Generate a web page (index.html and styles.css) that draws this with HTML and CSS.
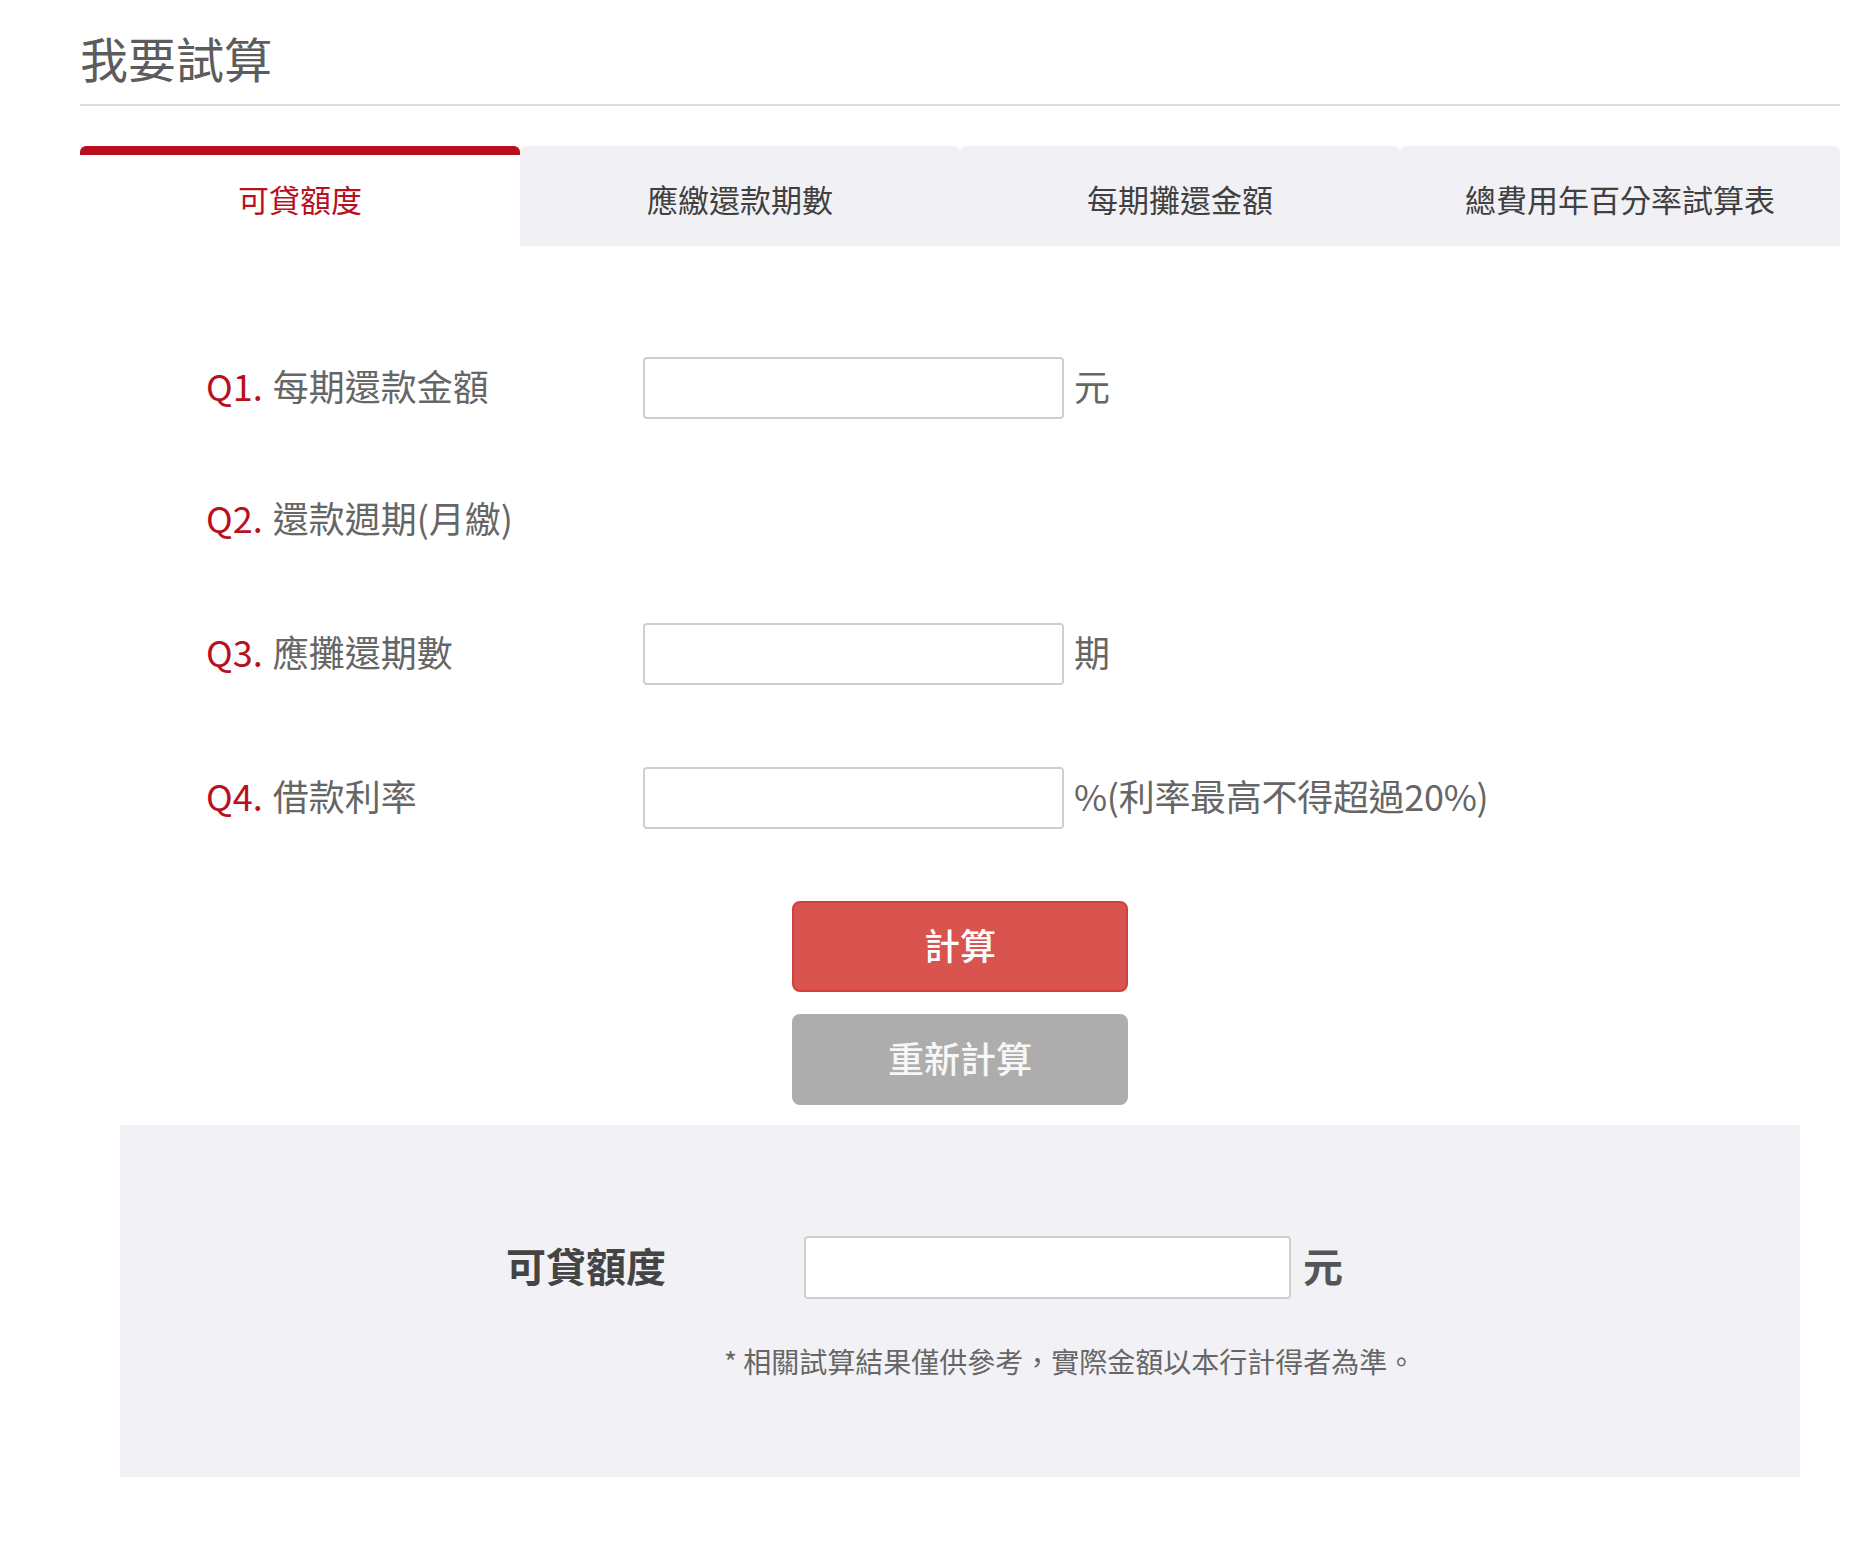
FILE: index.html
```html
<!DOCTYPE html>
<html lang="zh-Hant">
<head>
    <meta charset="UTF-8">
    <meta name="viewport" content="width=device-width, initial-scale=1.0">
    <title>我要試算</title>
    <link rel="stylesheet" href="styles.css">
</head>
<body>
    <div class="page">
        <h1 class="page-title">我要試算</h1>

        <ul class="tabs">
            <li class="tab active">可貸額度</li>
            <li class="tab">應繳還款期數</li>
            <li class="tab">每期攤還金額</li>
            <li class="tab">總費用年百分率試算表</li>
        </ul>

        <form class="calc-form" id="calc-form">
            <div class="row row-q1">
                <label class="q" for="pay-amount"><span class="q-no">Q1.</span>每期還款金額</label>
                <input type="text" class="field" id="pay-amount">
                <span class="unit">元</span>
            </div>
            <div class="row row-q2">
                <label class="q"><span class="q-no">Q2.</span>還款週期(月繳)</label>
            </div>
            <div class="row row-q3">
                <label class="q" for="periods"><span class="q-no">Q3.</span>應攤還期數</label>
                <input type="text" class="field" id="periods">
                <span class="unit">期</span>
            </div>
            <div class="row row-q4">
                <label class="q" for="rate"><span class="q-no">Q4.</span>借款利率</label>
                <input type="text" class="field" id="rate">
                <span class="unit">%(利率最高不得超過20%)</span>
            </div>

            <div class="actions">
                <button type="button" class="btn btn-calc">計算</button>
                <button type="reset" class="btn btn-reset">重新計算</button>
            </div>
        </form>

        <section class="result">
            <div class="result-row">
                <span class="result-label">可貸額度</span>
                <input type="text" class="result-field" readonly>
                <span class="result-unit">元</span>
            </div>
            <p class="note">* 相關試算結果僅供參考，實際金額以本行計得者為準。</p>
        </section>
    </div>
</body>
</html>
```

FILE: styles.css
```css
body {
    margin: 0;
    background-color: #fff;
    font-family: "Noto Sans CJK TC", "Noto Sans", sans-serif;
    color: #666;
}

.page {
    width: 1760px;
    padding-left: 80px;
}

.page-title {
    margin: 0;
    padding-top: 29px;
    padding-bottom: 19px;
    font-size: 48px;
    line-height: 56px;
    font-weight: 400;
    color: #5c5c5c;
    border-bottom: 2px solid #dcdcdf;
}

/* tabs */
.tabs {
    display: flex;
    list-style: none;
    margin: 40px 0 0;
    padding: 0;
}

.tab {
    flex: 1;
    box-sizing: border-box;
    height: 100px;
    border-top: 9px solid transparent;
    border-radius: 6px 6px 0 0;
    background-color: #f1f1f5;
    font-size: 31px;
    line-height: 88px;
    text-align: center;
    color: #404040;
}

.tab.active {
    background-color: #fff;
    border-top-color: #b8101e;
    color: #b8101e;
}

/* form */
.calc-form {
    padding-top: 111px;
}

.row {
    display: flex;
    align-items: center;
    height: 62px;
    padding-left: 126px;
}

.row-q2 {
    margin-top: 70px;
}

.row-q3 {
    margin-top: 72px;
}

.row-q4 {
    margin-top: 82px;
}

.q {
    width: 437px;
    padding-bottom: 7px;
    font-size: 36px;
    line-height: 44px;
    color: #666;
}

.q-no {
    color: #b8101e;
    margin-right: 10px;
}

.field {
    box-sizing: border-box;
    width: 421px;
    height: 62px;
    border: 2px solid #cfcfcf;
    border-radius: 4px;
    background-color: #fff;
}

.unit {
    margin-left: 10px;
    padding-bottom: 7px;
    font-size: 36px;
    line-height: 44px;
    letter-spacing: -0.3px;
    color: #666;
}

.actions {
    display: flex;
    flex-direction: column;
    align-items: center;
    gap: 22px;
    margin-top: 72px;
}

.btn {
    box-sizing: border-box;
    width: 336px;
    height: 91px;
    padding: 0 0 6px;
    border-radius: 8px;
    font-family: "Noto Sans CJK TC", sans-serif;
    font-size: 36px;
    font-weight: 500;
    color: #fff;
    cursor: pointer;
}

.btn-calc {
    background-color: #d9534f;
    border: 2px solid #d43f3a;
}

.btn-reset {
    background-color: #adadad;
    border: none;
    color: #f7f7f7;
}

/* result */
.result {
    margin: 20px 40px 0;
    padding: 111px 0 96px 386px;
    background-color: #f2f2f6;
}

.result-row {
    display: flex;
    align-items: center;
    height: 63px;
}

.result-label {
    width: 298px;
    padding-bottom: 6px;
    font-size: 40px;
    font-weight: 700;
    color: #444;
}

.result-field {
    box-sizing: border-box;
    width: 487px;
    height: 63px;
    border: 2px solid #cfcfcf;
    border-radius: 4px;
    background-color: #fff;
}

.result-unit {
    margin-left: 12px;
    padding-bottom: 6px;
    font-size: 40px;
    font-weight: 700;
    color: #555;
}

.note {
    margin: 42px 0 0;
    padding-left: 218px;
    font-size: 28px;
    line-height: 40px;
    color: #666;
}
```
